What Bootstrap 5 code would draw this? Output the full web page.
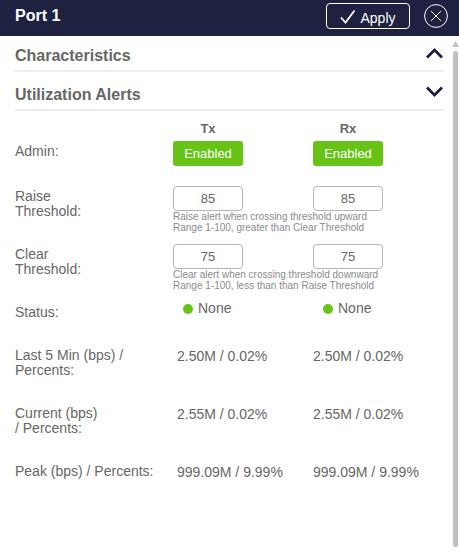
<!DOCTYPE html>
<html lang="en">
<head>
<meta charset="utf-8">
<meta name="viewport" content="width=device-width, initial-scale=1">
<title>Port 1</title>
<link href="https://cdn.jsdelivr.net/npm/bootstrap@5.3.0/dist/css/bootstrap.min.css" rel="stylesheet">
<style>
:root { --navy: #1f2140; --ink: #676767; --green: #67c416; }
body { font-family: "Liberation Sans", Arial, sans-serif; font-size: 14px; line-height: 15px; color: var(--ink); background: #fff; }
.panel-head { background: var(--navy); height: 36px; padding: 0 11px 0 15px; }
.panel-title { font-size: 16px; line-height: 20px; font-weight: 700; padding-bottom: 4px; }
.btn-apply { width: 84px; height: 26px; border: 1px solid #fff; border-radius: 4px; background: none; color: #fff; font-size: 14px; line-height: 16px; }
.btn-apply span { padding-top: 3px; }
.btn-round { background: none; border: 0; line-height: 0; margin-left: 14px; }
.panel-main { padding: 0 7px 0 15px; }
.section-head { border: 0; border-bottom: 2px solid #ebeff3; background: none; color: var(--ink); font-size: 16px; line-height: 20px; font-weight: 700; height: 39px; padding: 8px 0 0; }
.section-head:first-child { height: 36px; padding-top: 6px; }
.section-head svg { margin: 0 1px 6px 0; }
.alerts { display: grid; grid-template-columns: 158px 140px 1fr; grid-template-rows: 30px 45px 58px 58px 43px 58px 58px auto; }
.col-title { width: 70px; font-size: 13px; font-weight: 700; padding-top: 10px; }
.field-label { padding-top: 3px; }
.field-pair { grid-column: 2 / 4; }
.field-inputs { gap: 70px; }
.btn-state { width: 70px; height: 25px; border: 0; border-radius: 3px; background: var(--green); color: #fff; font-size: 13px; line-height: 15px; }
.num-input { width: 70px; height: 25px; border: 1px solid #b5b5b5; border-radius: 4px; font-size: 13px; line-height: 15px; color: var(--ink); padding: 0; }
.help-text { font-size: 10px; line-height: 11px; color: #8b8b8b; }
.state-value { height: 13px; padding-left: 10px; gap: 5px; }
.state-dot { width: 10px; height: 10px; background: var(--green); }
.metric { padding: 4px 0 0 4px; }
.metric + .metric { padding-left: 0; }
.scroll-rail { width: 8px; padding: 5px 0 6px; }
.scroll-thumb { width: 5px; border-radius: 3px; background: #bfc1c0; margin-top: 4px; }
</style>
</head>
<body>
<div class="d-flex flex-column vh-100">
  <header class="panel-head d-flex align-items-center text-white">
    <h1 class="panel-title mb-0 me-auto">Port 1</h1>
    <button type="button" class="btn-apply d-flex align-items-center justify-content-center gap-1 p-0 mb-1">
      <svg width="16" height="16" viewBox="0 0 16 16" fill="none" stroke="#fff" stroke-width="1.8" aria-hidden="true"><path d="M1 9.5 5.5 14.5 14.5 2.5"/></svg>
      <span>Apply</span>
    </button>
    <button type="button" class="btn-round p-0 mb-1" aria-label="Close">
      <svg width="24" height="24" viewBox="0 0 24 24" fill="none" stroke="#fff" aria-hidden="true"><circle cx="12" cy="12" r="11.4"/><path d="M7 7 17 17M17 7 7 17"/></svg>
    </button>
  </header>
  <div class="d-flex flex-grow-1">
    <main class="panel-main flex-grow-1">
      <button type="button" class="section-head d-flex w-100 align-items-center justify-content-between">
        Characteristics
        <svg width="17" height="11" viewBox="0 0 17 11" fill="none" stroke="#1f2140" stroke-width="2.8" aria-hidden="true"><path d="M1 9.5 8.5 2 16 9.5"/></svg>
      </button>
      <button type="button" class="section-head d-flex w-100 align-items-center justify-content-between">
        Utilization Alerts
        <svg width="17" height="11" viewBox="0 0 17 11" fill="none" stroke="#1f2140" stroke-width="2.8" aria-hidden="true"><path d="M1 1.5 8.5 9 16 1.5"/></svg>
      </button>
      <form class="alerts">
        <span></span>
        <div class="col-title text-center">Tx</div>
        <div class="col-title text-center">Rx</div>

        <div class="field-label">Admin:</div>
        <div><button type="button" class="btn-state p-0">Enabled</button></div>
        <div><button type="button" class="btn-state p-0">Enabled</button></div>

        <label class="field-label" for="raise-tx">Raise<br>Threshold:</label>
        <div class="field-pair">
          <div class="field-inputs d-flex">
            <input class="num-input text-center" id="raise-tx" type="text" value="85">
            <input class="num-input text-center" type="text" value="85" aria-label="Rx raise threshold">
          </div>
          <div class="help-text">Raise alert when crossing threshold upward<br>Range 1-100, greater than Clear Threshold</div>
        </div>

        <label class="field-label" for="clear-tx">Clear<br>Threshold:</label>
        <div class="field-pair">
          <div class="field-inputs d-flex">
            <input class="num-input text-center" id="clear-tx" type="text" value="75">
            <input class="num-input text-center" type="text" value="75" aria-label="Rx clear threshold">
          </div>
          <div class="help-text">Clear alert when crossing threshold downward<br>Range 1-100, less than than Raise Threshold</div>
        </div>

        <div class="field-label">Status:</div>
        <div class="state-value d-flex align-items-center"><span class="state-dot rounded-circle"></span>None</div>
        <div class="state-value d-flex align-items-center"><span class="state-dot rounded-circle"></span>None</div>

        <div class="field-label">Last 5 Min (bps) /<br>Percents:</div>
        <div class="metric">2.50M / 0.02%</div>
        <div class="metric">2.50M / 0.02%</div>

        <div class="field-label">Current (bps)<br>/ Percents:</div>
        <div class="metric">2.55M / 0.02%</div>
        <div class="metric">2.55M / 0.02%</div>

        <div class="field-label">Peak (bps) / Percents:</div>
        <div class="metric">999.09M / 9.99%</div>
        <div class="metric">999.09M / 9.99%</div>
      </form>
    </main>
    <div class="scroll-rail d-flex flex-column align-items-center" aria-hidden="true">
      <svg width="7" height="6" viewBox="0 0 7 6"><path d="M3.5 0 7 6H0Z" fill="#bfc1c0"/></svg>
      <div class="scroll-thumb flex-grow-1"></div>
    </div>
  </div>
</div>
<script src="https://cdn.jsdelivr.net/npm/bootstrap@5.3.0/dist/js/bootstrap.bundle.min.js"></script>
</body>
</html>
